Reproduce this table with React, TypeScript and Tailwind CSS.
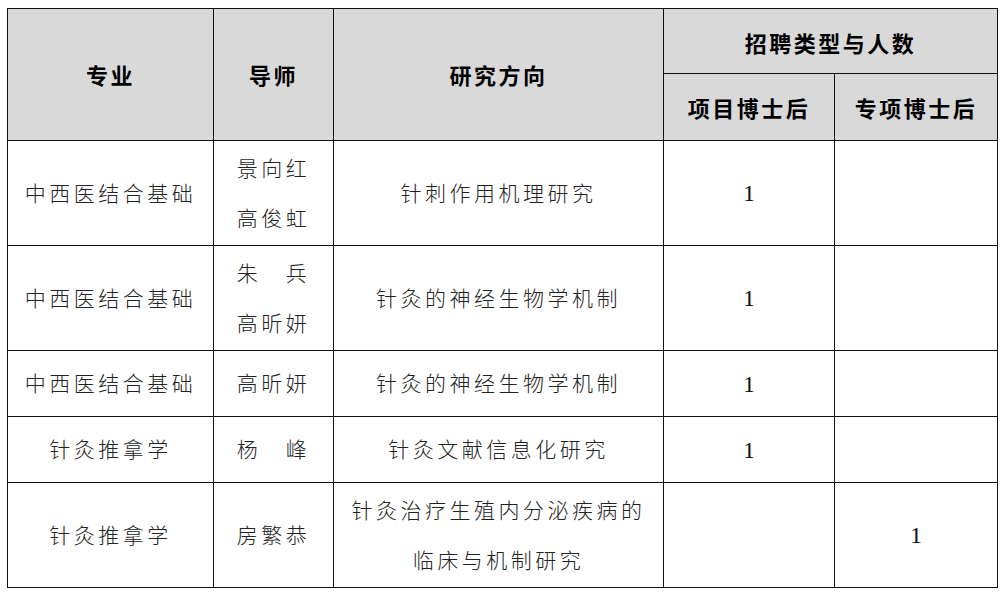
import React from "react";

const cjk = '"Noto Sans CJK SC", "Noto Sans", sans-serif';

const th =
  "border-[1.5px] border-[#111] bg-[#d9d9d9] text-center align-middle p-0 text-[22px] font-bold text-black tracking-[2.5px]";
const td =
  "border-[1.5px] border-[#111] bg-white text-center align-middle pt-0 pb-[3px] px-0 text-[21px] font-light text-[#222] tracking-[3.5px] leading-[50px]";
const num =
  "border-[1.5px] border-[#111] bg-white text-center align-middle p-0 text-[24px] text-[#111]";

type Row = {
  major: string;
  tutor: string[];
  dir: string[];
  a: string;
  b: string;
  h: string;
};

const rows: Row[] = [
  { major: "中西医结合基础", tutor: ["景向红", "高俊虹"], dir: ["针刺作用机理研究"], a: "1", b: "", h: "h-[105px]" },
  { major: "中西医结合基础", tutor: ["朱\u3000兵", "高昕妍"], dir: ["针灸的神经生物学机制"], a: "1", b: "", h: "h-[105px]" },
  { major: "中西医结合基础", tutor: ["高昕妍"], dir: ["针灸的神经生物学机制"], a: "1", b: "", h: "h-[66px]" },
  { major: "针灸推拿学", tutor: ["杨\u3000峰"], dir: ["针灸文献信息化研究"], a: "1", b: "", h: "h-[66px]" },
  { major: "针灸推拿学", tutor: ["房繁恭"], dir: ["针灸治疗生殖内分泌疾病的", "临床与机制研究"], a: "", b: "1", h: "h-[105px]" },
];

export default function App() {
  return (
    <div className="w-[1006px] h-[598px] bg-white pl-[7px] pt-[8px]" style={{ fontFamily: cjk }}>
      <table className="table-fixed border-collapse w-[990px]">
        <colgroup>
          <col className="w-[206px]" />
          <col className="w-[120px]" />
          <col className="w-[330px]" />
          <col className="w-[171px]" />
          <col className="w-[163px]" />
        </colgroup>
        <thead>
          <tr className="h-[65px]">
            <th rowSpan={2} className={th}>专业</th>
            <th rowSpan={2} className={th}>导师</th>
            <th rowSpan={2} className={th}>研究方向</th>
            <th colSpan={2} className={th + " pt-[2px]"}>招聘类型与人数</th>
          </tr>
          <tr className="h-[67px]">
            <th className={th}>项目博士后</th>
            <th className={th}>专项博士后</th>
          </tr>
        </thead>
        <tbody>
          {rows.map((r, i) => (
            <tr key={i} className={r.h}>
              <td className={td}>{r.major}</td>
              <td className={td}>
                {r.tutor.map((t, j) => (
                  <div key={j}>{t}</div>
                ))}
              </td>
              <td className={td}>
                {r.dir.map((t, j) => (
                  <div key={j}>{t}</div>
                ))}
              </td>
              <td className={num} style={{ fontFamily: '"Liberation Serif", serif' }}>{r.a}</td>
              <td className={num} style={{ fontFamily: '"Liberation Serif", serif' }}>{r.b}</td>
            </tr>
          ))}
        </tbody>
      </table>
    </div>
  );
}
